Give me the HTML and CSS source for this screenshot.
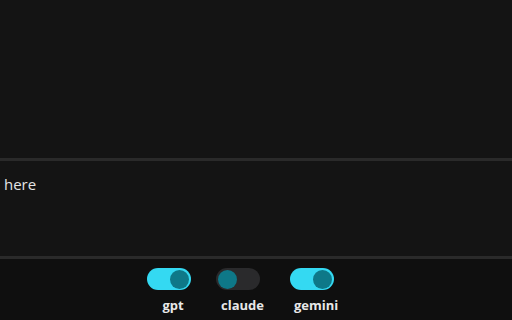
FILE: index.html
```html
<!DOCTYPE html>
<html>
<head>
<meta charset="UTF-8">
<meta name="viewport" content="width=device-width, initial-scale=1">
<link rel="stylesheet" href="styles.css">
</head>
<body>

<div class="page">
    <!-- chat output -->
    <div class="output"></div>

    <!-- prompt box -->
    <div class="prompt">here</div>

    <!-- model switches -->
    <div class="models">
        <label class="model">
            <span class="toggle on"><span class="knob"></span></span>
            <span class="name">gpt</span>
        </label>
        <label class="model">
            <span class="toggle"><span class="knob"></span></span>
            <span class="name">claude</span>
        </label>
        <label class="model">
            <span class="toggle on"><span class="knob"></span></span>
            <span class="name">gemini</span>
        </label>
    </div>
</div>

</body>
</html>
```

FILE: styles.css
```css
html, body {
    margin: 0;
    height: 100%;
    font-family: "Open Sans", "Noto Sans", sans-serif;
}

body {
    background-color: #141414;
    color: #e4e4e4;
}

.page {
    display: flex;
    flex-direction: column;
    height: 320px;
    overflow: hidden;
}

.output {
    flex-shrink: 0;
    height: 158px;
    border-bottom: 3px solid #2a2a2a;
}

.prompt {
    flex-shrink: 0;
    height: 82px;
    padding: 13px 4px 0;
    font-size: 15px;
    border-bottom: 3px solid #2a2a2a;
}

.models {
    flex: 1;
    background-color: #0f0f0f;
    display: flex;
    align-items: flex-start;
    gap: 22px;
    padding: 9px 0 0 147px;
}

.model {
    display: flex;
    flex-direction: column;
    align-items: center;
}

.toggle {
    width: 44px;
    height: 22px;
    border-radius: 11px;
    background-color: #2a2a2c;
    display: flex;
    align-items: center;
    padding: 0 2px;
    box-sizing: border-box;
}

.toggle.on {
    background-color: #34d9f2;
    justify-content: flex-end;
}

.knob {
    width: 19px;
    height: 19px;
    border-radius: 50%;
    background-color: #0e7888;
}

.name {
    margin-top: 6px;
    padding-left: 8px;
    font-size: 13px;
    font-weight: bold;
    color: #e8e8e8;
}
```
